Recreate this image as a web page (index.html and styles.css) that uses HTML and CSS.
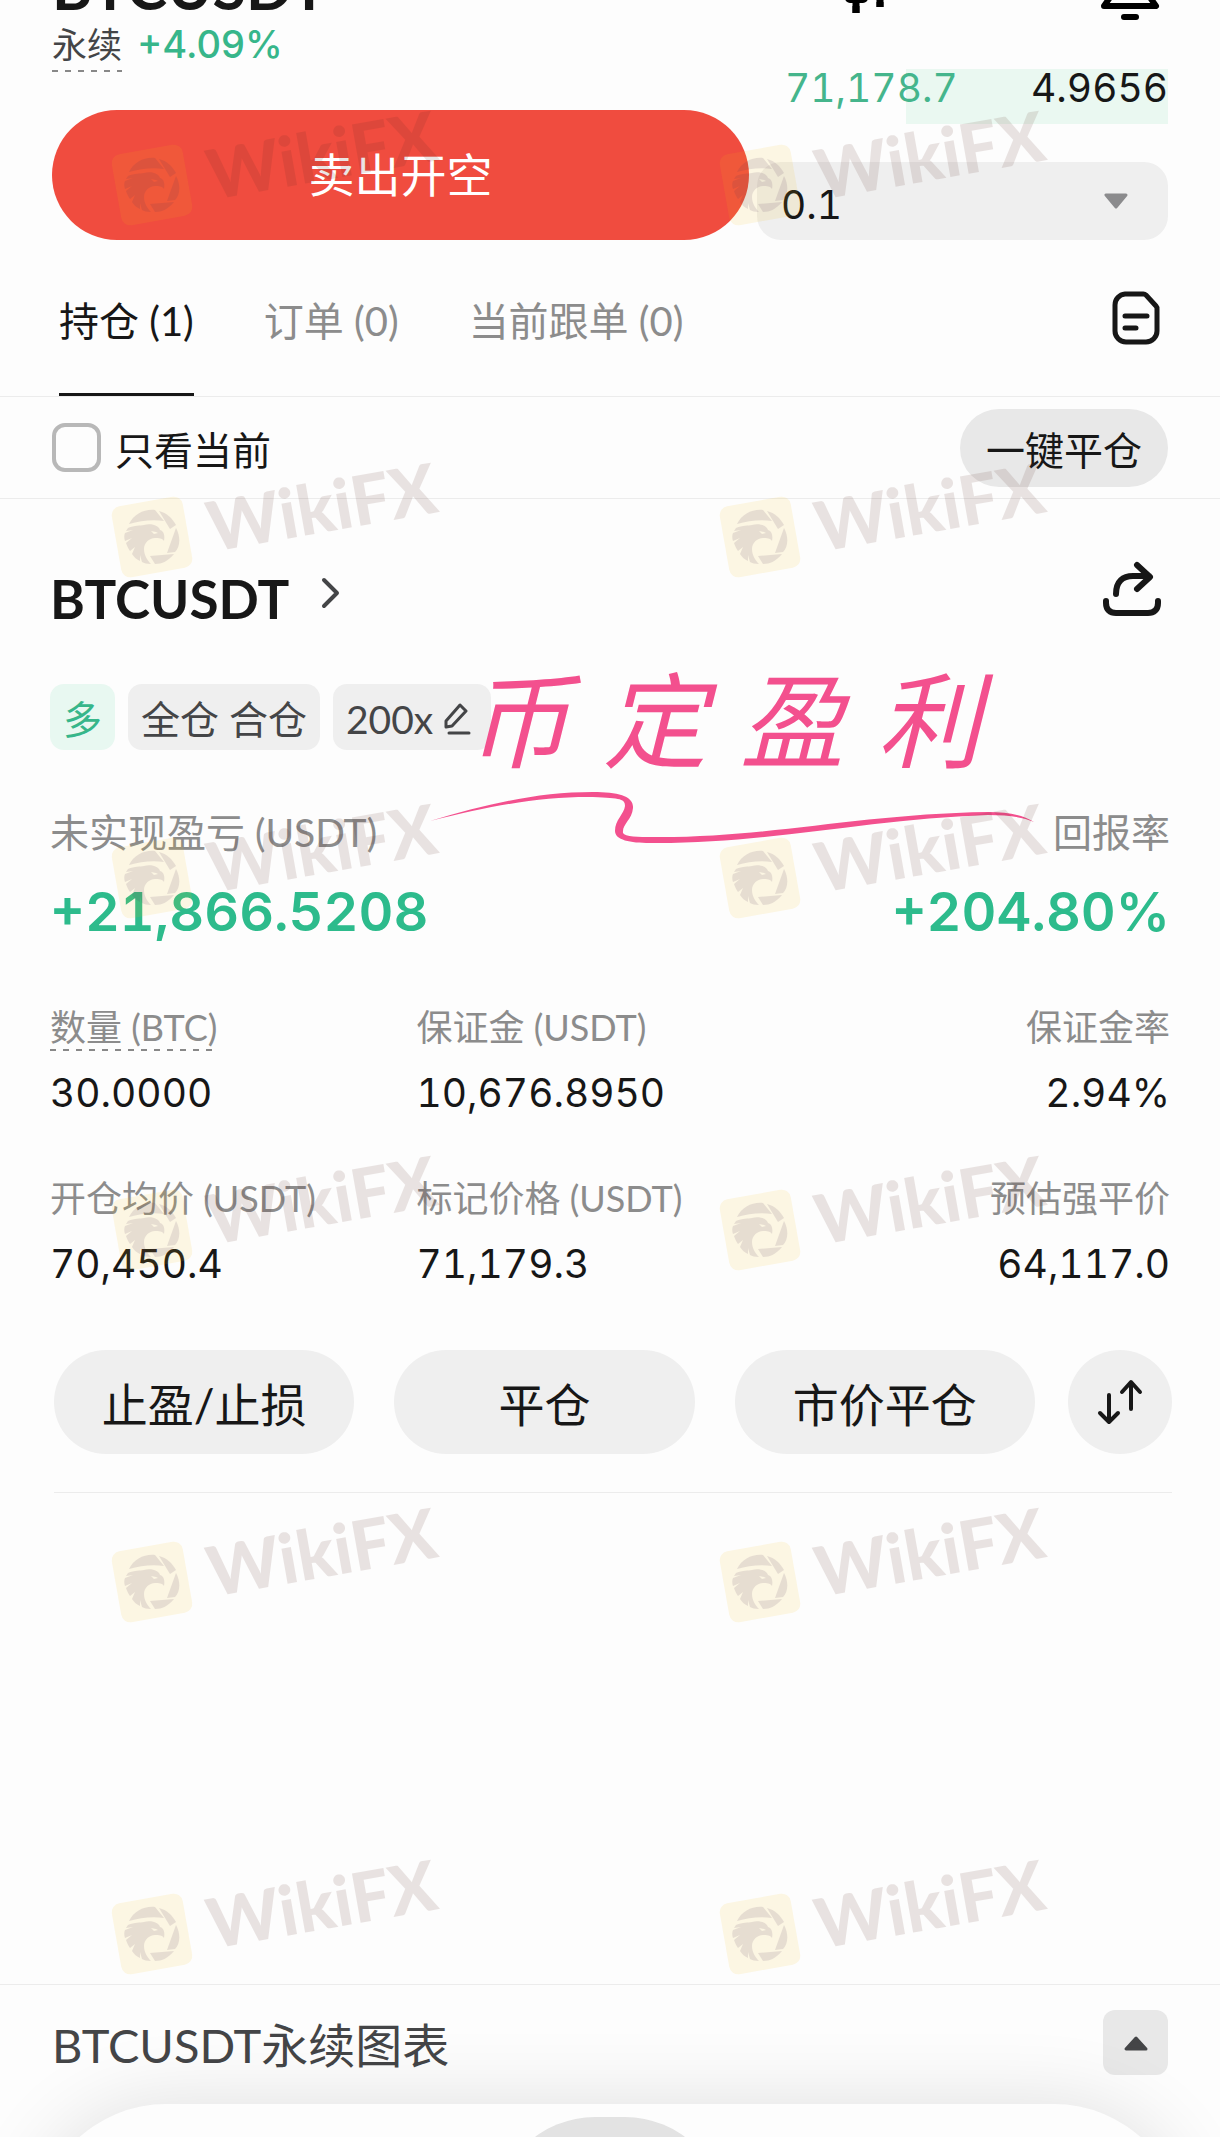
FILE: index.html
```html
<!DOCTYPE html>
<html lang="zh-CN">
<head>
    <meta charset="UTF-8">
    <meta name="viewport" content="width=device-width, initial-scale=1.0">
    <title>BTCUSDT 永续</title>
    <link rel="stylesheet" href="styles.css">
</head>
<body>
    <header class="topbar">
        <h1 class="topbar-title">BTCUSDT</h1>
        <button class="icon-button candles" type="button" aria-label="K线">
            <svg width="44" height="60" viewBox="0 0 44 60">
                <path d="M11 4v9M11 46v7M35 2v7M35 42v5" stroke="#000" stroke-width="7"/>
                <rect x="3" y="14" width="17" height="26" rx="2" fill="none" stroke="#000" stroke-width="6"/>
                <rect x="27" y="8" width="15" height="24" rx="2" fill="none" stroke="#000" stroke-width="6"/>
                <path d="M35 30v17M11 40v13" stroke="#000" stroke-width="7"/>
            </svg>
        </button>
        <button class="icon-button" type="button" aria-label="提醒">
            <svg width="62" height="60" viewBox="0 0 62 60">
                <path d="M5 46l7-10V24a19 19 0 0 1 38 0v12l7 10z" fill="none" stroke="#000" stroke-width="6" stroke-linejoin="round"/>
                <path d="M25 57h12" stroke="#000" stroke-width="6" stroke-linecap="round"/>
            </svg>
        </button>
    </header>

    <section class="trade">
        <div class="trade-left">
            <p class="change"><span class="term">永续</span> <span class="change-value">+4.09%</span></p>
            <button class="sell" type="button">卖出开空</button>
        </div>
        <div class="trade-right">
            <div class="depth"><span class="depth-price">71,178.7</span><span>4.9656</span></div>
            <div class="step">
                <select class="step-select" aria-label="价格精度">
                    <option>0.1</option>
                    <option>1</option>
                    <option>10</option>
                </select>
                <svg class="step-arrow" width="24" height="16" viewBox="0 0 24 16"><path d="M2 2h20L12 14z" fill="#8b8b8d" stroke="#8b8b8d" stroke-width="3" stroke-linejoin="round"/></svg>
            </div>
        </div>
    </section>

    <nav class="tabs">
        <a class="tab active" href="#positions">持仓 (1)</a>
        <a class="tab" href="#orders">订单 (0)</a>
        <a class="tab" href="#copy">当前跟单 (0)</a>
        <button class="icon-button records" type="button" aria-label="记录">
            <svg width="50" height="56" viewBox="0 0 50 56">
                <path d="M14 4h18a4 4 0 0 1 3 1l10 11a4 4 0 0 1 1 3v22a11 11 0 0 1-11 11H15A11 11 0 0 1 4 41V15A11 11 0 0 1 14 4z" fill="none" stroke="#171717" stroke-width="5"/>
                <path d="M14 26h22M14 38h11" stroke="#171717" stroke-width="5" stroke-linecap="round"/>
            </svg>
        </button>
    </nav>

    <div class="filter">
        <input class="filter-check" type="checkbox" id="onlyCurrent">
        <label for="onlyCurrent">只看当前</label>
        <button class="close-all" type="button">一键平仓</button>
    </div>

    <main class="position" id="positions">
        <div class="position-head">
            <h2>BTCUSDT</h2>
            <svg class="chevron" width="20" height="32" viewBox="0 0 20 32"><path d="M3 3l13 13L3 29" fill="none" stroke="#444547" stroke-width="4" stroke-linecap="round" stroke-linejoin="round"/></svg>
            <button class="icon-button share" type="button" aria-label="分享">
                <svg width="60" height="56" viewBox="0 0 60 56">
                    <path d="M4 40v2c0 7 4 10 10 10h32c6 0 10-3 10-10v-2" fill="none" stroke="#171717" stroke-width="6" stroke-linecap="round"/>
                    <path d="M14 33c0-13 7-18 17-18h16M35 4l13 12-13 12" fill="none" stroke="#171717" stroke-width="6" stroke-linecap="round" stroke-linejoin="round"/>
                </svg>
            </button>
        </div>

        <div class="tags">
            <span class="tag long">多</span>
            <span class="tag">全仓 合仓</span>
            <button class="tag leverage" type="button">200x
                <svg width="28" height="32" viewBox="0 0 28 32"><path d="M3 18L17 2l6 6L9 23l-6 1zM6 30h20" fill="none" stroke="#444547" stroke-width="3" stroke-linecap="round" stroke-linejoin="round"/></svg>
            </button>
        </div>

        <dl class="summary">
            <div>
                <dt>未实现盈亏 (USDT)</dt>
                <dd>+21,866.5208</dd>
            </div>
            <div class="right">
                <dt>回报率</dt>
                <dd>+204.80%</dd>
            </div>
        </dl>

        <dl class="stats">
            <div>
                <dt><span class="term">数量 (BTC)</span></dt>
                <dd>30.0000</dd>
            </div>
            <div>
                <dt>保证金 (USDT)</dt>
                <dd>10,676.8950</dd>
            </div>
            <div class="right">
                <dt>保证金率</dt>
                <dd>2.94%</dd>
            </div>
            <div>
                <dt>开仓均价 (USDT)</dt>
                <dd>70,450.4</dd>
            </div>
            <div>
                <dt>标记价格 (USDT)</dt>
                <dd>71,179.3</dd>
            </div>
            <div class="right">
                <dt>预估强平价</dt>
                <dd>64,117.0</dd>
            </div>
        </dl>

        <div class="actions">
            <div class="actions-main">
                <button type="button">止盈/止损</button>
                <button type="button">平仓</button>
                <button type="button">市价平仓</button>
            </div>
            <button type="button" aria-label="反手">
                <svg width="46" height="46" viewBox="0 0 46 46"><path d="M12 16v26M3 34l9 9 9-9M34 30V4M25 13l9-10 9 10" fill="none" stroke="#171717" stroke-width="4" stroke-linecap="round" stroke-linejoin="round"/></svg>
            </button>
        </div>

        <!-- pink note over the card -->
        <div class="note">
            <p class="note-text"><span>币</span><span>定</span><span>盈</span><span>利</span></p>
            <svg class="note-line" width="610" height="56" viewBox="0 0 610 56">
                <path d="M2 33C58 16 110 4 165 4C190 4 206 8 205 20C204 32 194 36 195 45C197 49 210 49 225 49C340 50 430 26 560 24C580 24 595 27 606 34C594 29 580 27 560 27C440 31 340 56 222 55C202 55 187 52 187 43C187 32 196 26 197 18C197 10 190 10 160 9C112 9 66 17 2 33z" fill="#f3508e"/>
            </svg>
        </div>
    </main>

    <footer class="chart-bar">
        <span>BTCUSDT永续图表</span>
        <button class="chart-toggle" type="button" aria-label="展开图表">
            <svg width="26" height="16" viewBox="0 0 26 16"><path d="M3 14h20L13 3z" fill="#444547" stroke="#444547" stroke-width="3" stroke-linejoin="round"/></svg>
        </button>
    </footer>
    <div class="sheet"><div class="sheet-knob"></div></div>

    <svg class="defs" width="0" height="0" aria-hidden="true">
        <symbol id="mark" viewBox="0 0 350 130">
            <g transform="translate(50 83)">
                <rect x="-36" y="-36" width="72" height="72" rx="9" transform="rotate(-10)" fill="#f2bb10" opacity=".11"/>
                <g fill="#503058" opacity=".12">
                    <path d="M-23-13C-18-23-8-28 3-27L12-16C0-18-12-16-23-13z"/>
                    <path d="M7-26C15-24 20-19 24-12L18-8z"/>
                    <path d="M24-9C29 0 28 10 23 15L15 16z"/>
                    <path d="M-2 19L22 17C16 24 10 27 3 27z"/>
                    <path d="M-24-9C-17-12-12-11-8-12C0-14 7-11 8-7C12-6 13-1 12 4C10 1 7 1 3 1C-3 1-8 6-8 12C-8 18-5 23-1 27C-5 27-8 26-10 25L-12 18L-12 24C-16 22-18 20-20 17L-17 10L-22 14C-24 11-25 9-26 6L-20 1L-27 4C-28 1-28-2-27-4L-19-7L-26-6zM-1-6L2-3L6-4L4-5z" fill-rule="evenodd"/>
                </g>
            </g>
            <text x="110" y="98" transform="rotate(-10 110 98)" class="mark-text">WikiFX</text>
        </symbol>
    </svg>
    <div class="marks" aria-hidden="true">
        <svg><use href="#mark"/></svg><svg><use href="#mark"/></svg>
        <svg><use href="#mark"/></svg><svg><use href="#mark"/></svg>
        <svg><use href="#mark"/></svg><svg><use href="#mark"/></svg>
        <svg><use href="#mark"/></svg><svg><use href="#mark"/></svg>
        <svg><use href="#mark"/></svg><svg><use href="#mark"/></svg>
        <svg><use href="#mark"/></svg><svg><use href="#mark"/></svg>
    </div>
</body>
</html>
```
FILE: styles.css
```css
* {
    box-sizing: border-box;
}
html {
    overflow: auto;
}
body {
    margin: 0;
    min-height: 100vh;
    position: relative;
    overflow: hidden;
    display: flex;
    flex-direction: column;
    background: #fdfdfd;
    color: #171717;
    font-family: Lato, "Noto Sans CJK SC", sans-serif;
    font-size: 39px;
    line-height: 40px;
}
h1, h2, p, dl, dd {
    margin: 0;
}
button, select {
    font: inherit;
    color: inherit;
    border: none;
    padding: 0;
}
svg {
    display: block;
}
.icon-button {
    background: none;
}

/* top */
.topbar {
    display: flex;
    align-items: flex-end;
    height: 20px;
    padding: 0 59px 0 52px;
}
.topbar-title {
    font-size: 61px;
    line-height: 60px;
    margin-bottom: 3px;
}
.candles {
    margin-left: auto;
    margin-right: 210px;
}
.trade {
    display: grid;
    grid-template-columns: 697fr 411fr;
    gap: 8px;
    padding: 0 52px;
}
.term {
    display: inline-block;
    background: repeating-linear-gradient(90deg, #888 0 6px, transparent 6px 13px) left bottom / 100% 2px no-repeat;
}
.change {
    font-size: 35px;
    line-height: 48px;
    color: #444547;
}
.change .term {
    padding-bottom: 4px;
}
.change-value {
    margin-left: 6px;
    font-family: Inter, sans-serif;
    font-size: 38px;
    font-weight: 500;
    color: #37b68a;
}
.sell {
    width: 100%;
    height: 130px;
    margin-top: 38px;
    border-radius: 65px;
    background: #f04c3f;
    color: #fff;
    font-size: 46px;
}
.depth {
    display: flex;
    justify-content: space-between;
    height: 55px;
    margin-top: 49px;
    padding-left: 28px;
    font-family: Inter, sans-serif;
    font-variant-numeric: tabular-nums;
    line-height: 38px;
    background: linear-gradient(#eaf8f1, #eaf8f1) right / 262px 100% no-repeat;
}
.depth-price {
    color: #45b58c;
}
.step {
    position: relative;
    margin-top: 38px;
}
.step-select {
    appearance: none;
    width: 100%;
    height: 78px;
    padding: 8px 24px 0;
    border-radius: 24px;
    background: #efefef;
    font-family: Inter, sans-serif;
    font-variant-numeric: tabular-nums;
}
.step-arrow {
    position: absolute;
    right: 40px;
    top: 31px;
}

/* tabs */
.tabs {
    display: flex;
    gap: 70px;
    height: 157px;
    padding: 0 59px;
    border-bottom: 1px solid #ececec;
}
.tab {
    padding-top: 61px;
    color: #8c8c8c;
    font-size: 40px;
    text-decoration: none;
}
.tab.active {
    color: #171717;
    border-bottom: 3px solid #171717;
}
.records {
    margin: 50px 0 auto auto;
}
.filter {
    display: flex;
    align-items: center;
    height: 102px;
    padding: 0 52px;
    border-bottom: 1px solid #ececec;
}
.filter label {
    padding-top: 4px;
}
.filter-check {
    appearance: none;
    width: 49px;
    height: 49px;
    margin: 0 14px 0 0;
    border: 4px solid #b8b8b8;
    border-radius: 13px;
}
.filter-check:checked {
    background: #171717;
}
.close-all {
    height: 78px;
    margin-left: auto;
    padding: 4px 26px 0;
    border-radius: 39px;
    background: #e8e8e8;
}

/* position card */
.position {
    position: relative;
    flex: 1;
    padding: 68px 50px 0;
}
.position-head {
    display: flex;
    align-items: center;
    height: 64px;
}
.position-head h2 {
    font-size: 53px;
}
.chevron {
    margin: 0 auto 12px 32px;
}
.share {
    margin: 0 8px 20px 0;
}
.tags {
    display: flex;
    gap: 13px;
    margin-top: 53px;
}
.tag {
    display: flex;
    align-items: center;
    gap: 10px;
    height: 66px;
    padding: 4px 13px 0;
    border-radius: 14px;
    background: #efefef;
    color: #444547;
}
.tag.long {
    background: #e8f8f1;
    color: #37b68a;
}
.tag.leverage {
    padding-right: 20px;
}
dt {
    color: #8c8c8c;
}
.right {
    text-align: right;
}
.summary {
    display: flex;
    justify-content: space-between;
    margin-top: 62px;
}
.summary dd {
    margin-top: 30px;
    font-family: Inter, sans-serif;
    font-size: 54px;
    font-variant-numeric: tabular-nums;
    font-weight: 600;
    line-height: 60px;
    color: #2dbb8c;
}
.stats {
    display: grid;
    grid-template-columns: 36fr 37fr 37fr;
    row-gap: 65px;
    margin-top: 65px;
}
.stats dt {
    height: 44px;
    font-size: 36px;
}
.stats .term {
    padding-bottom: 4px;
}
.stats dd {
    margin-top: 22px;
    font-family: Inter, sans-serif;
    font-variant-numeric: tabular-nums;
}
.actions {
    display: grid;
    grid-template-columns: 1fr 104px;
    gap: 38px 33px;
    margin: 66px -2px 0 4px;
}
.actions-main {
    display: grid;
    grid-template-columns: repeat(3, 1fr);
    gap: 40px;
}
.actions button {
    display: flex;
    align-items: center;
    justify-content: center;
    height: 104px;
    border-radius: 52px;
    background: #efefef;
    font-size: 46px;
}
.actions-main button {
    padding-top: 6px;
}
.actions::after {
    content: "";
    grid-column: 1 / -1;
    border-top: 1px solid #ececec;
}
.note {
    position: absolute;
    left: 428px;
    top: 153px;
    color: #f3508e;
}
.note-text {
    display: flex;
    gap: 33px;
    padding-left: 38px;
    font-size: 104px;
    font-style: italic;
    line-height: 136px;
}

/* bottom */
.chart-bar {
    display: flex;
    align-items: center;
    justify-content: space-between;
    height: 120px;
    padding: 0 52px;
    border-top: 1px solid #ececec;
    font-size: 47px;
    color: #444547;
}
.chart-toggle {
    display: flex;
    align-items: center;
    justify-content: center;
    width: 65px;
    height: 65px;
    margin-bottom: 4px;
    border-radius: 12px;
    background: #e8e8e8;
}
/* only the top of the sheet is on screen */
.sheet {
    height: 260px;
    margin: 0 36px -227px;
    padding-top: 13px;
    border-radius: 130px;
    background: #fdfdfd;
    box-shadow: 0 0 80px rgba(0, 0, 0, 0.12);
}
.sheet-knob {
    width: 230px;
    height: 200px;
    margin: 0 auto;
    border-radius: 100px;
    background: #e3e3e3;
}

/* watermark */
.defs {
    position: absolute;
}
.marks {
    position: absolute;
    left: 102px;
    right: 0;
    top: 102px;
    display: grid;
    grid-template-columns: 608px 1fr;
    grid-template-rows: 352px 341px 352px 352px 352px;
    pointer-events: none;
}
.marks svg {
    width: 350px;
    height: 130px;
}
.mark-text {
    font-family: Lato, sans-serif;
    font-size: 69px;
    font-weight: 900;
    fill: #5a2a20;
    opacity: .12;
}
```
